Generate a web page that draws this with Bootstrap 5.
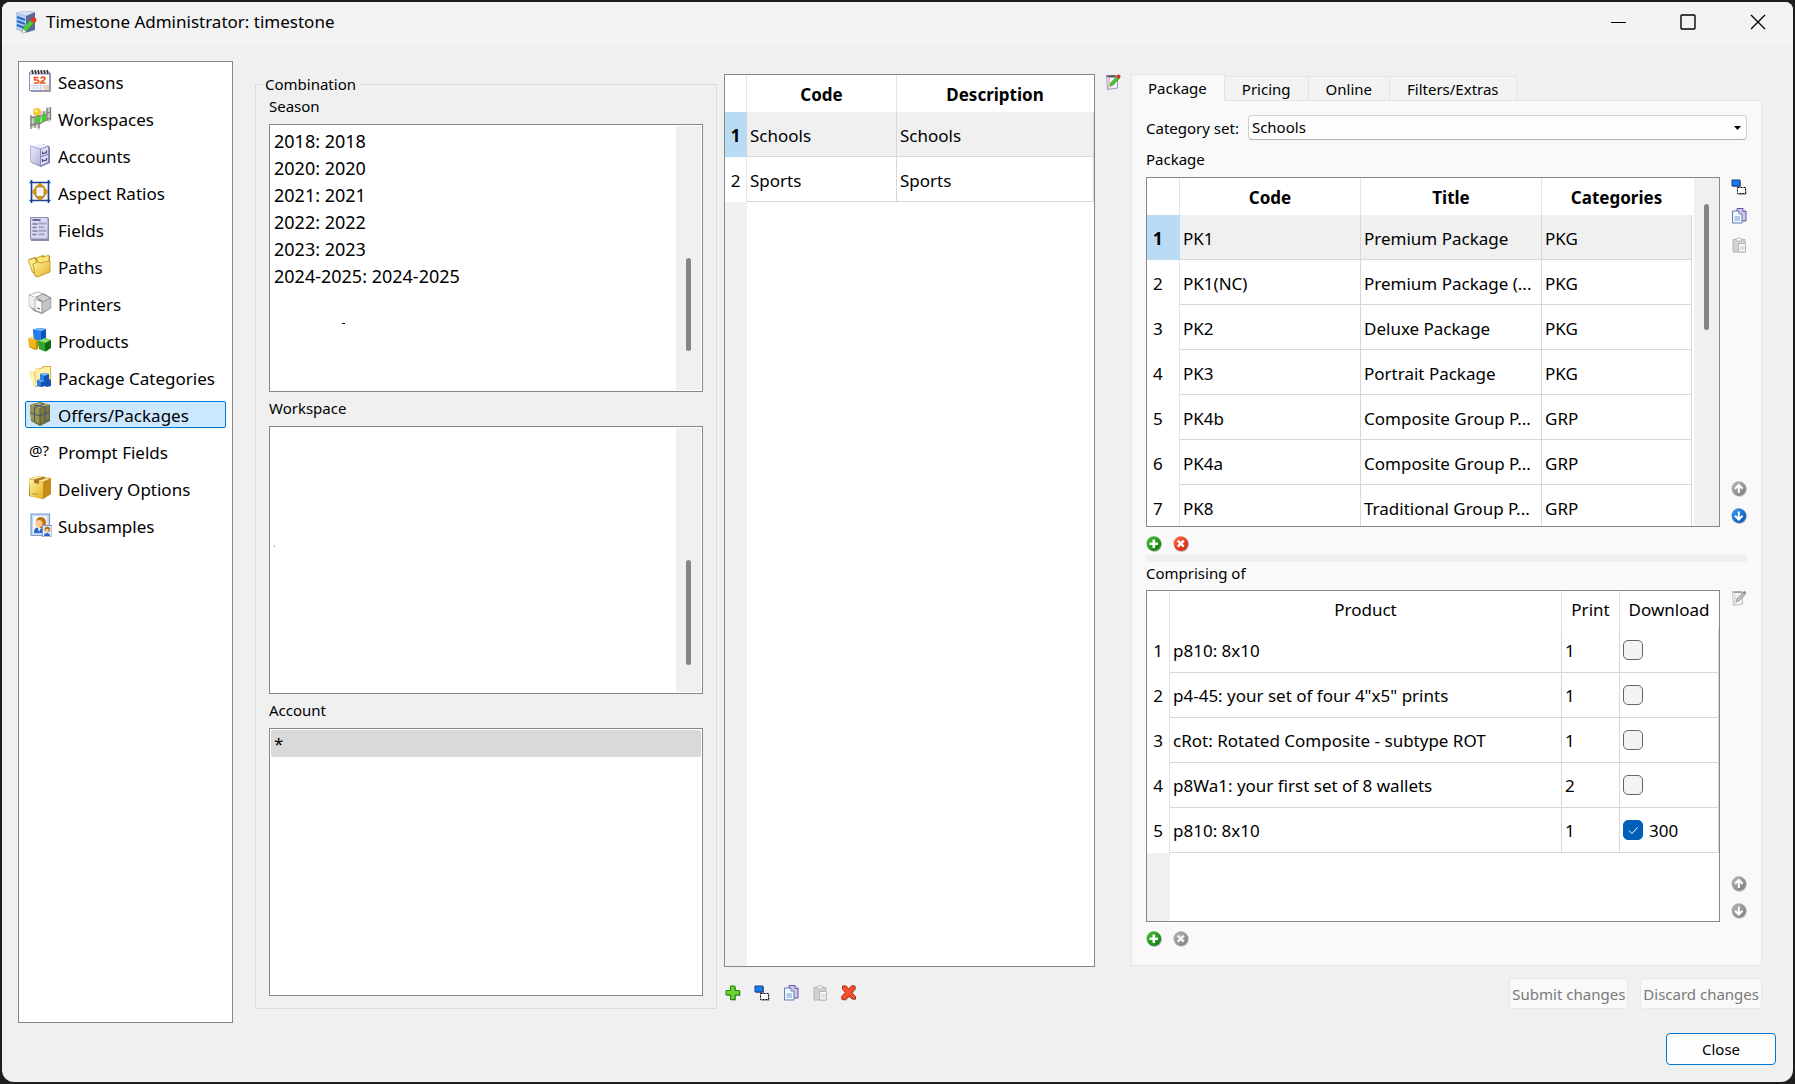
<!DOCTYPE html>
<html lang="en">
<head>
<meta charset="utf-8">
<meta name="viewport" content="width=device-width, initial-scale=1">
<title>Timestone Administrator: timestone</title>
<link href="https://cdn.jsdelivr.net/npm/bootstrap@5.3.0/dist/css/bootstrap.min.css" rel="stylesheet">
<style>
  html { background: #1e1e20; }
  body { font-family: "Noto Sans", "Open Sans", sans-serif; font-size: 17px; line-height: 22px; color: #000; background: #1e1e20; height: 100vh; overflow: hidden; padding: 2px; }
  .app-window { background: #f0f0f0; border-radius: 8px 8px 12px 12px; overflow: hidden; }
  .title-bar { height: 43px; background: #f3f3f3; padding: 0 26px 3px 12px; font-size: 17px; }
  .win-btn { border: 0; background: none; padding: 0; width: 18px; height: 18px; line-height: 0; }
  .win-btns { gap: 52px; }
  .app-body { padding: 16px 17px 17px 16px; gap: 10px; }
  .sunken { background: #fff; border: 1px solid #828790; }
  .side-nav { flex: 0 0 215px; padding: 6px; gap: 10px; margin-right: 22px; }
  .side-nav a { display: flex; align-items: center; gap: 6px; height: 27px; color: #000; text-decoration: none; padding: 2px 2px 0; border: 1px solid transparent; border-radius: 2px; white-space: nowrap; }
  .side-nav a.active { background: #cce8ff; border-color: #0078d4; }
  .side-nav svg { width: 24px; height: 24px; flex: none; margin-bottom: 4px; }
  .columns { padding: 13px 14px 14px 0; }
  .group-box { flex: 1 1 462px; min-width: 0; border: 1px solid #dcdcdc; padding: 1px 13px 12px; margin-right: 7px; }
  .group-box legend { float: none; width: auto; font-size: 15px; line-height: 20px; margin: 0 0 0 -6px; padding: 0 4px 0 2px; }
  .lbl { font-size: 15px; line-height: 22px; height: 22px; }
  .group-box .lbl { margin: 5px 0 7px; }
  .group-box .lbl.first-lbl { margin-top: 0; }
  .listing { flex: 1 1 0; min-height: 0; padding: 1px; overflow: hidden; }
  .listing ul { font-size: 18px; }
  .year-list { padding-top: 2px; }
  .listing li { line-height: 27px; height: 27px; padding: 0 3px; }
  .listing li.picked { background: #d9d9d9; border-radius: 2px; font-size: 17px; }
  .dash-mark { width: 3px; height: 1px; background: #000; margin: 33px 0 0 71px; }
  .dot-mark { width: 1px; height: 2px; background: #e0a050; margin: 117px 0 0 3px; }
  .sbar { width: 25px; background: #f0f0f0; flex: none; display: flex; flex-direction: column; align-items: center; }
  .sbar i { width: 5px; border-radius: 3px; background: #858585; }
  .offers { flex: 1 1 371px; min-width: 0; }
  .grid-wrap { min-height: 0; overflow: hidden; }
  .offers .grid-wrap { background: linear-gradient(90deg, #f0f0f0 22px, #fff 22px); }
  .data-grid { width: 100%; table-layout: fixed; border-collapse: separate; border-spacing: 0; font-size: 17px; background: #fff; }
  .data-grid th, .data-grid td { white-space: nowrap; overflow: hidden; text-overflow: ellipsis; padding: 0 3px; border-right: 1px solid #d8d8d8; }
  .data-grid thead th { height: 37px; text-align: center; border-right-color: #e5e5e5; padding-top: 2px; }
  .data-grid thead th:last-child { border-right-color: transparent; }
  .data-grid tbody tr { height: 45px; }
  .data-grid td { border-bottom: 1px solid #d8d8d8; padding-top: 3px; }
  .data-grid tbody th { font-weight: 400; text-align: center; border-right-color: #e5e5e5; padding: 2px 0 0; }
  .data-grid tr.current td { background: #f0f0f0; }
  .data-grid tr.current th { background: #b9dcf4; border-right-color: #b9dcf4; font-weight: 700; }
  .plain-head thead th { font-weight: 400; }
  .data-grid.wide-index tbody th { text-align: left; padding-left: 6px; }
  .pkg-scroll { padding-right: 2px; }
  .ico-btn { border: 0; background: none; padding: 0; width: 16px; height: 16px; line-height: 0; display: block; }
  .ico-btn svg { width: 16px; height: 16px; }
  .tool-row { height: 42px; padding: 18px 0 0 1px; gap: 13px; }
  .edit-col { width: 36px; padding: 0 10px; flex: none; }
  .detail { flex: 1 1 631px; min-width: 0; }
  .detail .nav-tabs { border: 0; font-size: 15px; align-items: flex-end; }
  .detail .nav-link { color: #000; background: #f3f3f3; border: 1px solid #e5e5e5; border-left: 0; border-bottom: 0; border-radius: 0; margin: 0; height: 24px; padding: 1px 17px 0; line-height: 20px; }
  .detail .nav-link.active { background: #f9f9f9; border: 1px solid #e5e5e5; border-bottom: 0; height: 27px; margin-bottom: -1px; padding: 1px 17px 2px 16px; position: relative; z-index: 1; border-radius: 2px 2px 0 0; }
  .tab-panel { background: #f9f9f9; border: 1px solid #e5e5e5; padding: 14px 14px 18px 14px; min-height: 0; }
  .cat-select { height: 25px; font-size: 15px; line-height: 20px; color: #000; padding: 0 24px 1px 3px; border: 1px solid #d0d0d0; border-bottom-color: #b0b0b0; border-radius: 4px; background: #fdfdfd url("data:image/svg+xml,%3Csvg xmlns='http://www.w3.org/2000/svg' viewBox='0 0 7 4'%3E%3Cpath d='M0 0h7L3.5 4z'/%3E%3C/svg%3E") no-repeat right 5px center / 7px 4px; }
  .cat-lbl { margin-right: 9px; }
  .pkg-lbl { margin: 8px 0 7px; }
  .comp-lbl { margin-bottom: 6px; }
  .side-tools { width: 20px; margin-left: 11px; padding: 2px 0 3px; }
  .side-tools .top-set { gap: 13px; }
  .side-tools .end-set, .round-row { gap: 11px; }
  .round-row { padding: 9px 0 0; }
  .splitter { height: 7px; background: #f0f0f0; margin-top: 3px; }
  .pkg-area { flex: 348 1 0; min-height: 0; }
  .comp-area { flex: 331 1 0; min-height: 0; }
  .comp-area .side-tools { padding-top: 0; }
  .comp-wrap { background: linear-gradient(90deg, #f0f0f0 23px, #fff 23px); }
  .data-grid .form-check-input { width: 20px; height: 20px; margin: 0 6px 0 0; border: 1px solid #666; border-radius: 5px; background-color: #f3f3f3; vertical-align: -3px; float: none; }
  .data-grid .form-check-input:checked { background-color: #005fb8; border-color: #005fb8; background-size: 14px 14px; background-image: url("data:image/svg+xml,%3Csvg xmlns='http://www.w3.org/2000/svg' viewBox='0 0 14 14'%3E%3Cpath d='M3 7.5l3 3 5.500-6' fill='none' stroke='%23fff' stroke-width='1'/%3E%3C/svg%3E"); }
  .submit-row { padding-top: 12px; gap: 12px; }
  .flat-btn { font-size: 15px; line-height: 20px; padding: 0 2px; height: 31px; border-radius: 4px; border: 1px solid #e8e8e8; background: #f9f9f9; color: #7a7a7a; white-space: nowrap; }
  .flat-btn:disabled { color: #7a7a7a; background: #f9f9f9; border-color: #e8e8e8; opacity: 1; }
  .close-btn { width: 110px; height: 32px; font-size: 15px; line-height: 20px; padding: 0; background: #fdfdfd; border: 1px solid #0078d4; border-radius: 4px; color: #000; }
</style>
</head>
<body>
<svg width="0" height="0" class="position-absolute" aria-hidden="true">
  <defs>
    <linearGradient id="gGrey" x1="0" y1="0" x2="1" y2="1"><stop offset="0" stop-color="#b8b8b8"/><stop offset="1" stop-color="#7c7c7c"/></linearGradient>
    <linearGradient id="gGreen" x1="0" y1="0" x2="1" y2="1"><stop offset="0" stop-color="#4cc038"/><stop offset="1" stop-color="#067a08"/></linearGradient>
    <linearGradient id="gRed" x1="0" y1="0" x2="1" y2="1"><stop offset="0" stop-color="#ff7350"/><stop offset="1" stop-color="#cf1c08"/></linearGradient>
    <linearGradient id="gBlue" x1="0" y1="0" x2="1" y2="1"><stop offset="0" stop-color="#3d9cf5"/><stop offset="1" stop-color="#0050b4"/></linearGradient>
    <linearGradient id="gLilac" x1="0" y1="0" x2="1" y2="1"><stop offset="0" stop-color="#eceaff"/><stop offset="1" stop-color="#b3b3d8"/></linearGradient>
    <linearGradient id="gGold" x1="0" y1="0" x2="1" y2="1"><stop offset="0" stop-color="#fff3a0"/><stop offset="1" stop-color="#e3b325"/></linearGradient>
  </defs>
  <symbol id="i-app" viewBox="0 0 24 24"><path d="M2 3l8-2 11 1v18l-10 3-9-4z" fill="#5a68a0"/><path d="M2 3l8-2 11 1-9 4z" fill="#dcdff0"/><path d="M2 3l10 3v17L2 19z" fill="#b4cdf0"/><path d="M3 7l8 3M3 11l8 3M3 15l8 3" stroke="#1d6cc8" stroke-width="2"/><path d="M8 23l1-5 8-8.500 3.500 3-8.500 9z" fill="#53c83a" stroke="#2a8a1c" stroke-width=".7"/><path d="M8 23l1-4 3 3z" fill="#fff"/><circle cx="19.500" cy="10" r="2.800" fill="#e03a20"/></symbol>
  <symbol id="i-cal" viewBox="0 0 24 24"><path d="M3 4h20v19H3z" fill="#9a9aaa"/><path d="M1.500 3h20v18.500h-20z" fill="#fff" stroke="#9090b8"/><path d="M2 3h19v3H2z" fill="#c7c7e0"/><path d="M4 1l1 4M7 1l1 4M10 1l1 4M13 1l1 4M16 1l1 4M19 1l1 4" stroke="#333" stroke-width="1.500"/><path d="M10.500 8.500H6.500V11h2.500q1.700 0 1.700 1.500T9 14H6M12.700 9.500q.5-1.300 2.200-1.300 2 0 2 1.600c0 1.500-3 2.200-4.200 4.200h4.800" fill="none" stroke="#f0541c" stroke-width="1.700"/><path d="M2 16.500h19M2 19h19M5.500 15.500v6M9 15.500v6M12.500 15.500v6M16 15.500v6" stroke="#c8c8e4" stroke-width=".8"/><path d="M17 17h4v4h-4z" fill="#f8cfa8"/></symbol>
  <symbol id="i-work" viewBox="0 0 24 24"><path d="M2 10h3l1 2h4V9l3-1V5l4 1 2-5h4v14l-3 1v-2l-8 4v5l-2 1-2-4-4 2-2-1z" fill="#cfcfca"/><circle cx="9" cy="6" r="4" fill="#f5c832"/><circle cx="8" cy="5" r="1.500" fill="#fff0a0"/><path d="M3 9v14M7 11v11M11 9v13M19 2v13M22.500 1v13M16 5v9M3 12l8-2M3 19l8-2M11 11l11-5M11 18l11-6" stroke="#7d7d78" stroke-width="1.300" fill="none"/><path d="M7 13l4-3 2 2-1 4-4 1zM14 10l4-2v6l-4 2z" fill="#3bd02a"/></symbol>
  <symbol id="i-cab" viewBox="0 0 24 24"><path d="M4 4l11-3 7 3v16l-9 4-9-4z" fill="#8585b4"/><path d="M2.500 3L12 .5 20.500 3l-8 3z" fill="#efefff"/><path d="M2.500 3l10 3v17l-10-4z" fill="url(#gLilac)" stroke="#9898c4" stroke-width=".7"/><path d="M12.500 6l8-3v16l-8 4z" fill="#dcdcf6" stroke="#7f7fb2" stroke-width=".8"/><path d="M12.500 14l8-3" stroke="#7676a8"/><path d="M14.500 8.500v2.300l4-1.200V7.500M14.500 16v2.300l4-1.200v-2" stroke="#444a77" fill="none" stroke-width="1.200"/></symbol>
  <symbol id="i-aspect" viewBox="0 0 24 24"><path d="M4 3h17v18H4z" fill="#f4f4f4"/><path d="M1.500 2.500h21M1.500 20.500h21M3.500 0v23M20.500 0v23" stroke="#173f9a" stroke-width="1.600"/><path d="M12 3l4.500 4h-9zM12 20.500l4.500-4h-9zM4 11.800l4-4.500v9zM20 11.800l-4-4.500v9z" fill="#dc9b12" stroke="#a36d00" stroke-width=".6"/><path d="M8 7.500l2.500-1.500h3L16 7.500M8 16l2.500 1.500h3L16 16" fill="none" stroke="#c89431" stroke-width="1.500"/></symbol>
  <symbol id="i-form" viewBox="0 0 24 24"><path d="M3 1h18v23H3z" fill="#8989a6"/><path d="M2.500 .5h17.500v21.500H2.500z" fill="#d9d9f1" stroke="#8888b0"/><path d="M4.500 3h8" stroke="#444c86" stroke-width="1.500"/><path d="M4.500 7h5M4.500 10.500h4M4.500 14h5M4.500 17.500h4" stroke="#777ba5" stroke-width="1.300"/><path d="M10.500 5.500h8v2h-8zM10.500 9.200h6v2h-6zM10.500 12.700h8v2h-8zM10.500 16.200h6v2h-6z" fill="#a4a4c8"/></symbol>
  <symbol id="i-folder" viewBox="0 0 24 24"><path d="M1 5l6-2 2 1 6-3 2 2 5-1v14l-13 6-5-4z" fill="#a68324"/><path d="M0 6l7-2 4 12-6 3z" fill="#ffe98a" stroke="#c99b25" stroke-width=".8"/><path d="M9 4l3-2 3 1 6-2v9l-12 3z" fill="#fbe47c" stroke="#c99b25" stroke-width=".8"/><path d="M5 10l5-2 2 1 10-2v11L9 23l-2-1z" fill="url(#gGold)" stroke="#bd8d18" stroke-width=".8"/></symbol>
  <symbol id="i-printer" viewBox="0 0 24 24"><path d="M1 4l9-3 7 2 6 4v10l-9 6-8-3-5-5z" fill="#8f8f8f"/><path d="M1 4l9-3 8 3-8 4z" fill="#fff" stroke="#999" stroke-width=".6"/><path d="M1 4l9 3v13l-9-5z" fill="#eee" stroke="#aaa" stroke-width=".5"/><path d="M8 6l7-3 8 4-8 4z" fill="#cfcfcf" stroke="#777" stroke-width=".7"/><path d="M7 8l7 3v11l-7-3z" fill="#fbfbfb" stroke="#999" stroke-width=".7"/><path d="M14 11l9-4v10l-9 5z" fill="#c4c4c4" stroke="#8a8a8a" stroke-width=".6"/><path d="M9 17l3 1" stroke="#555"/></symbol>
  <symbol id="i-cubes" viewBox="0 0 24 24"><path d="M2 11h8v10l-3 1-6-3z" fill="#c28708"/><path d="M0 10l4-1.500 8 1.500-4 2.500z" fill="#ffe46a"/><path d="M0 10l8 2.500V21l-7-2.500z" fill="#efb51b"/><path d="M5 1.500L11 0l7 1v9l-5 3-7-2z" fill="#0c53c0"/><path d="M5 1.500L11 0l7 1-5 2.200z" fill="#7cb8ff"/><path d="M5 1.500l8 1.700v9.600L6 11z" fill="#2a7ded"/><path d="M10 13l7-3 6 2v8l-5 3.500-7-3z" fill="#0d6d10"/><path d="M10 13l7-3 6 2-6 3z" fill="#8be06f"/><path d="M10 13l7 2.500v8L11 21z" fill="#31a629"/></symbol>
  <symbol id="i-pcat" viewBox="0 0 24 24"><path d="M1 7l5-1 1 1V4l6-1 2-2h8v19L7 22z" fill="#d9ae3d"/><path d="M1 7l5-1 2 15-3-1z" fill="#fff2ae"/><path d="M7 4.500l7-1 2-1.500h6v18L8 21z" fill="#fff0a8"/><path d="M12 9l5-1 4 1v6l-5 1-4-2zM9 15l5-1 4 2v5l-5 1-4-2zM17 15l4-1 2 1v6l-4 1-2-1z" fill="#1452b4"/><path d="M12 9l5-1 4 1-5 2zM9 15l4-1 4 2-4 1z" fill="#7db8ff"/><path d="M12 9.500l4 1.500v5l-4-1zM9 15.500l4 1.500v5l-4-1z" fill="#2f80e6"/></symbol>
  <symbol id="i-offer" viewBox="0 0 24 24"><path d="M2 3l10-3 10 3v16l-10 5-9-5z" fill="#66693d"/><path d="M2 4l9-3 10 2-9 3z" fill="#b7b568"/><path d="M2 4l10 2v16l-9-4z" fill="#969551"/><path d="M12 6l9-3v14l-9 5z" fill="#7a7b44"/><path d="M2.500 11l9.500 3 9-4M6.500 5v14.500M17 4v15M6 3l10 2M16 2L7 5" stroke="#45507a" fill="none" stroke-width="1"/><path d="M12 6v16" stroke="#58602f"/></symbol>
  <symbol id="i-box" viewBox="0 0 24 24"><path d="M1 2.500L12 0l11 2v16l-8 5-14-3z" fill="#a67417"/><path d="M1 2.500L12 0l11 2-8 4z" fill="#ffe996"/><path d="M1 3l14 3v17L2 20z" fill="url(#gGold)"/><path d="M15 6l8-4v15l-8 6z" fill="#c28d1a"/><path d="M6 3.500L15 1l4 1-8 2.500V8L6 7z" fill="#a9752c"/><path d="M4 18h6" stroke="#b98c26"/></symbol>
  <symbol id="i-people" viewBox="0 0 24 24"><path d="M3 1h18.500v21.500H3z" fill="#c5d8f5" stroke="#7f9cc9" stroke-width="1.200"/><path d="M5 3h14v17H5z" fill="#f5f7ff"/><path d="M8 8q1-4 5-4 5 0 5 6l-1 5h-5z" fill="#b9730d"/><circle cx="11" cy="10.500" r="3.600" fill="#ffc98c"/><path d="M6 20c0-6 3-5.500 5-5 4 0 5 1 5 5z" fill="#2b64c4"/><path d="M10 15l1 4 2-4z" fill="#fff"/><path d="M14.500 12.500H24V24h-9.500z" fill="#dfe9fb" stroke="#7f9cc9"/><circle cx="19.300" cy="16.500" r="2.800" fill="#b56a0d"/><circle cx="19" cy="17.500" r="1.800" fill="#ffc98c"/><path d="M16 23c0-4 6-4 6 0z" fill="#2b64c4"/></symbol>
  <symbol id="s-edit" viewBox="0 0 16 16"><path d="M1.500 2h11v12l-10 1.500z" fill="#f5f5ff" stroke="#9c9cc4"/><path d="M1 1.500l9-.5 2 2.500H3z" fill="#5a5a66"/><path d="M4 4v11" stroke="#f08080"/><path d="M5 12l1-3.500 6-6 2.300 2L8 11z" fill="#4cc436" stroke="#1e7d14" stroke-width=".6"/><circle cx="13.500" cy="2.500" r="2" fill="#d8301c"/></symbol>
  <symbol id="s-edit-off" viewBox="0 0 16 16"><path d="M1.500 2h10v12l-9 1.500z" fill="#f4f4f4" stroke="#c0c0c0"/><path d="M1 1.500l9-.5 1 2H3z" fill="#a0a0a0"/><path d="M4 4v11" stroke="#ccc"/><path d="M5 12l1-3.500 6-6 2.300 2L8 11z" fill="#bdbdbd" stroke="#888" stroke-width=".6"/><circle cx="13.500" cy="2.500" r="1.600" fill="#909090"/></symbol>
  <symbol id="s-dup" viewBox="0 0 16 16"><path d="M2 2h8v6H2z" fill="#888"/><path d="M1 1h8v6H1z" fill="#1d7ae8" stroke="#123f91"/><path d="M7 9.500h8.500V16H7z" fill="#aaa"/><path d="M6.500 8.500h8v6h-8z" fill="#fff" stroke="#000" stroke-dasharray="2 1"/></symbol>
  <symbol id="s-copy" viewBox="0 0 16 16"><path d="M6 .5h6l3 3V13H6z" fill="#cfc4ec" stroke="#6d54a3"/><path d="M12 .5v3h3" fill="#fff" stroke="#6d54a3"/><path d="M1.500 3H8l3 3v9H1.500z" fill="#f3f8ff" stroke="#5e7eb5"/><path d="M8 3v3h3" fill="#fff" stroke="#5e7eb5"/><path d="M3.500 8h5.500v5H3.500z" fill="#b5c8e8"/></symbol>
  <symbol id="s-paste" viewBox="0 0 16 16"><path d="M2 2.500h12V15H2z" fill="#d2d2d2" stroke="#b4b4b4"/><path d="M5 1.500h1.500L8 0l1.500 1.500H11V4H5z" fill="#efefef" stroke="#b4b4b4" stroke-width=".8"/><path d="M7.500 6.500h7v8.500h-7z" fill="#f7f7f7" stroke="#b4b4b4"/><path d="M9 9h4.500v4H9z" fill="#ddd"/></symbol>
  <symbol id="s-plus" viewBox="0 0 16 16"><path d="M6 2h5v4h4.500v5H11v4.500H6V11H2V6h4z" fill="#999"/><path d="M5.500 1h4.500v4.500H14.500V10H10v4.500H5.500V10H1V5.500h4.500z" fill="#69d630" stroke="#248413"/></symbol>
  <symbol id="s-cross" viewBox="0 0 16 16"><path d="M3 2l2.500-.5L8.500 5 12 1.500l3 .5v2L11.500 8.500 15 12v3h-3l-3.500-3L5 15.500H2v-3L5.500 8.500 2.500 5z" fill="#999"/><path d="M1.500 1l3.500-.2 2.700 3L11 .5l3 .5v2.500l-3.300 4L14.500 11.500v2.300H11L7.700 11l-3.200 3.300H.8v-3L4.200 7.500 1.500 4z" fill="#f8502e" stroke="#b31b08" stroke-width=".8"/></symbol>
  <symbol id="r-add" viewBox="0 0 16 16"><circle cx="8.500" cy="8.500" r="7.300" fill="#a5a5a5"/><circle cx="7.800" cy="7.600" r="7.300" fill="url(#gGreen)"/><path d="M7.800 3.500v8.500M3.500 7.700H12" stroke="#fff" stroke-width="2.600"/></symbol>
  <symbol id="r-del" viewBox="0 0 16 16"><circle cx="8.500" cy="8.500" r="7.300" fill="#a5a5a5"/><circle cx="7.800" cy="7.600" r="7.300" fill="url(#gRed)"/><path d="M4.800 4.600l6 6M10.800 4.600l-6 6" stroke="#fff" stroke-width="2.400"/></symbol>
  <symbol id="r-del-off" viewBox="0 0 16 16"><circle cx="8.500" cy="8.500" r="7.300" fill="#c5c5c5"/><circle cx="7.800" cy="7.600" r="7.300" fill="url(#gGrey)"/><path d="M4.800 4.600l6 6M10.800 4.600l-6 6" stroke="#f4f4f4" stroke-width="2.400"/></symbol>
  <symbol id="r-up-off" viewBox="0 0 16 16"><circle cx="8.500" cy="8.500" r="7.300" fill="#c5c5c5"/><circle cx="7.800" cy="7.600" r="7.300" fill="url(#gGrey)"/><path d="M7.800 12V4.500M4 7.800L7.800 4l3.800 3.800" fill="none" stroke="#fff" stroke-width="2"/></symbol>
  <symbol id="r-down-off" viewBox="0 0 16 16"><circle cx="8.500" cy="8.500" r="7.300" fill="#c5c5c5"/><circle cx="7.800" cy="7.600" r="7.300" fill="url(#gGrey)"/><path d="M7.800 3.500V11M4 7.700l3.800 3.800 3.800-3.800" fill="none" stroke="#fff" stroke-width="2"/></symbol>
  <symbol id="r-down" viewBox="0 0 16 16"><circle cx="8.500" cy="8.500" r="7.300" fill="#a5a5a5"/><circle cx="7.800" cy="7.600" r="7.300" fill="url(#gBlue)"/><path d="M7.800 3.500V11M4 7.700l3.800 3.800 3.800-3.800" fill="none" stroke="#fff" stroke-width="2"/></symbol>
</svg>

<div class="app-window h-100 d-flex flex-column">
  <header class="title-bar d-flex align-items-center">
    <svg width="24" height="24" class="me-2"><use href="#i-app"/></svg>
    <span class="me-auto">Timestone Administrator: timestone</span>
    <div class="win-btns d-flex">
      <button class="win-btn" aria-label="Minimize"><svg width="18" height="18"><path d="M2 9.500h15" stroke="#000"/></svg></button>
      <button class="win-btn" aria-label="Maximize"><svg width="18" height="18"><rect x="2" y="2" width="14" height="14" rx="1" fill="none" stroke="#000" stroke-width="1.400"/></svg></button>
      <button class="win-btn" aria-label="Close window"><svg width="18" height="18"><path d="M2 2l14 14M16 2L2 16" stroke="#000" stroke-width="1.300"/></svg></button>
    </div>
  </header>

  <main class="app-body d-flex flex-column flex-grow-1">
    <div class="d-flex flex-grow-1">
      <nav class="side-nav sunken d-flex flex-column">
        <a href="#"><svg><use href="#i-cal"/></svg>Seasons</a>
        <a href="#"><svg><use href="#i-work"/></svg>Workspaces</a>
        <a href="#"><svg><use href="#i-cab"/></svg>Accounts</a>
        <a href="#"><svg><use href="#i-aspect"/></svg>Aspect Ratios</a>
        <a href="#"><svg><use href="#i-form"/></svg>Fields</a>
        <a href="#"><svg><use href="#i-folder"/></svg>Paths</a>
        <a href="#"><svg><use href="#i-printer"/></svg>Printers</a>
        <a href="#"><svg><use href="#i-cubes"/></svg>Products</a>
        <a href="#"><svg><use href="#i-pcat"/></svg>Package Categories</a>
        <a href="#" class="active" aria-current="page"><svg><use href="#i-offer"/></svg>Offers/Packages</a>
        <a href="#"><svg viewBox="0 0 24 24"><text x="1" y="17" font-size="15" font-family="Noto Sans, sans-serif">@?</text></svg>Prompt Fields</a>
        <a href="#"><svg><use href="#i-box"/></svg>Delivery Options</a>
        <a href="#"><svg><use href="#i-people"/></svg>Subsamples</a>
      </nav>

      <div class="columns d-flex flex-grow-1">
        <fieldset class="group-box d-flex flex-column">
          <legend>Combination</legend>
          <div class="lbl first-lbl" id="lblSeason">Season</div>
          <div class="listing sunken d-flex">
            <div class="flex-grow-1">
              <ul class="list-unstyled mb-0 year-list" aria-labelledby="lblSeason">
                <li>2018: 2018</li>
                <li>2020: 2020</li>
                <li>2021: 2021</li>
                <li>2022: 2022</li>
                <li>2023: 2023</li>
                <li>2024-2025: 2024-2025</li>
              </ul>
              <div class="dash-mark"></div>
            </div>
            <div class="sbar"><span style="flex: 132"></span><i style="flex: 93"></i><span style="flex: 39"></span></div>
          </div>
          <div class="lbl" id="lblWorkspace">Workspace</div>
          <div class="listing sunken d-flex">
            <div class="flex-grow-1"><div class="dot-mark"></div></div>
            <div class="sbar"><span style="flex: 132"></span><i style="flex: 105"></i><span style="flex: 27"></span></div>
          </div>
          <div class="lbl" id="lblAccount">Account</div>
          <div class="listing sunken">
            <ul class="list-unstyled mb-0" aria-labelledby="lblAccount"><li class="picked">*</li></ul>
          </div>
        </fieldset>

        <section class="offers d-flex flex-column">
          <div class="grid-wrap sunken flex-grow-1">
            <table class="data-grid">
              <colgroup><col style="width:22px"><col style="width:150px"><col></colgroup>
              <thead><tr><th></th><th>Code</th><th>Description</th></tr></thead>
              <tbody>
                <tr class="current"><th>1</th><td>Schools</td><td>Schools</td></tr>
                <tr><th>2</th><td>Sports</td><td>Sports</td></tr>
              </tbody>
            </table>
          </div>
          <div class="tool-row d-flex">
            <button class="ico-btn" aria-label="Add"><svg><use href="#s-plus"/></svg></button>
            <button class="ico-btn" aria-label="Duplicate"><svg><use href="#s-dup"/></svg></button>
            <button class="ico-btn" aria-label="Copy"><svg><use href="#s-copy"/></svg></button>
            <button class="ico-btn" aria-label="Paste" disabled><svg><use href="#s-paste"/></svg></button>
            <button class="ico-btn" aria-label="Delete"><svg><use href="#s-cross"/></svg></button>
          </div>
        </section>
        <div class="edit-col"><button class="ico-btn" aria-label="Edit offer"><svg><use href="#s-edit"/></svg></button></div>

        <section class="detail d-flex flex-column">
          <div class="nav nav-tabs" role="tablist">
            <button class="nav-link active" role="tab">Package</button>
            <button class="nav-link" role="tab">Pricing</button>
            <button class="nav-link" role="tab">Online</button>
            <button class="nav-link" role="tab">Filters/Extras</button>
          </div>
          <div class="tab-panel d-flex flex-column flex-grow-1">
            <div class="d-flex align-items-center">
              <label class="lbl cat-lbl text-nowrap" for="catSet">Category set:</label>
              <select class="form-select cat-select" id="catSet"><option>Schools</option></select>
            </div>
            <div class="lbl pkg-lbl">Package</div>
            <div class="pkg-area d-flex">
              <div class="grid-wrap sunken flex-grow-1 d-flex">
                <div class="flex-grow-1 pkg-scroll">
                  <table class="data-grid wide-index">
                    <colgroup><col style="width:33px"><col><col><col style="width:150px"></colgroup>
                    <thead><tr><th></th><th>Code</th><th>Title</th><th>Categories</th></tr></thead>
                    <tbody>
                      <tr class="current"><th>1</th><td>PK1</td><td>Premium Package</td><td>PKG</td></tr>
                      <tr><th>2</th><td>PK1(NC)</td><td>Premium Package (...</td><td>PKG</td></tr>
                      <tr><th>3</th><td>PK2</td><td>Deluxe Package</td><td>PKG</td></tr>
                      <tr><th>4</th><td>PK3</td><td>Portrait Package</td><td>PKG</td></tr>
                      <tr><th>5</th><td>PK4b</td><td>Composite Group P...</td><td>GRP</td></tr>
                      <tr><th>6</th><td>PK4a</td><td>Composite Group P...</td><td>GRP</td></tr>
                      <tr><th>7</th><td>PK8</td><td>Traditional Group P...</td><td>GRP</td></tr>
                    </tbody>
                  </table>
                </div>
                <div class="sbar"><span style="flex: 26"></span><i style="flex: 126"></i><span style="flex: 196"></span></div>
              </div>
              <div class="side-tools d-flex flex-column justify-content-between">
                <div class="top-set d-flex flex-column">
                  <button class="ico-btn" aria-label="Duplicate package"><svg><use href="#s-dup"/></svg></button>
                  <button class="ico-btn" aria-label="Copy package"><svg><use href="#s-copy"/></svg></button>
                  <button class="ico-btn" aria-label="Paste package" disabled><svg><use href="#s-paste"/></svg></button>
                </div>
                <div class="end-set d-flex flex-column">
                  <button class="ico-btn" aria-label="Move up" disabled><svg><use href="#r-up-off"/></svg></button>
                  <button class="ico-btn" aria-label="Move down"><svg><use href="#r-down"/></svg></button>
                </div>
              </div>
            </div>
            <div class="round-row d-flex">
              <button class="ico-btn" aria-label="Add package"><svg><use href="#r-add"/></svg></button>
              <button class="ico-btn" aria-label="Remove package"><svg><use href="#r-del"/></svg></button>
            </div>
            <div class="splitter"></div>
            <div class="lbl comp-lbl">Comprising of</div>
            <div class="comp-area d-flex">
              <div class="grid-wrap comp-wrap sunken flex-grow-1">
                <table class="data-grid plain-head">
                  <colgroup><col style="width:23px"><col><col style="width:58px"><col style="width:99px"></colgroup>
                  <thead><tr><th></th><th>Product</th><th>Print</th><th>Download</th></tr></thead>
                  <tbody>
                    <tr><th>1</th><td>p810: 8x10</td><td>1</td><td><input class="form-check-input" type="checkbox" aria-label="Download row 1"></td></tr>
                    <tr><th>2</th><td>p4-45: your set of four 4"x5" prints</td><td>1</td><td><input class="form-check-input" type="checkbox" aria-label="Download row 2"></td></tr>
                    <tr><th>3</th><td>cRot: Rotated Composite - subtype ROT</td><td>1</td><td><input class="form-check-input" type="checkbox" aria-label="Download row 3"></td></tr>
                    <tr><th>4</th><td>p8Wa1: your first set of 8 wallets</td><td>2</td><td><input class="form-check-input" type="checkbox" aria-label="Download row 4"></td></tr>
                    <tr><th>5</th><td>p810: 8x10</td><td>1</td><td><input class="form-check-input" type="checkbox" id="dl5" checked><label for="dl5">300</label></td></tr>
                  </tbody>
                </table>
              </div>
              <div class="side-tools d-flex flex-column justify-content-between">
                <button class="ico-btn" aria-label="Edit product" disabled><svg><use href="#s-edit-off"/></svg></button>
                <div class="end-set d-flex flex-column">
                  <button class="ico-btn" aria-label="Move product up" disabled><svg><use href="#r-up-off"/></svg></button>
                  <button class="ico-btn" aria-label="Move product down" disabled><svg><use href="#r-down-off"/></svg></button>
                </div>
              </div>
            </div>
            <div class="round-row d-flex">
              <button class="ico-btn" aria-label="Add product"><svg><use href="#r-add"/></svg></button>
              <button class="ico-btn" aria-label="Remove product" disabled><svg><use href="#r-del-off"/></svg></button>
            </div>
          </div>
          <div class="submit-row d-flex justify-content-end">
            <button class="btn flat-btn" disabled>Submit changes</button>
            <button class="btn flat-btn" disabled>Discard changes</button>
          </div>
        </section>
      </div>
    </div>
    <div class="d-flex justify-content-end">
      <button class="btn close-btn">Close</button>
    </div>
  </main>
</div>
<script src="https://cdn.jsdelivr.net/npm/bootstrap@5.3.0/dist/js/bootstrap.bundle.min.js"></script>
</body>
</html>
